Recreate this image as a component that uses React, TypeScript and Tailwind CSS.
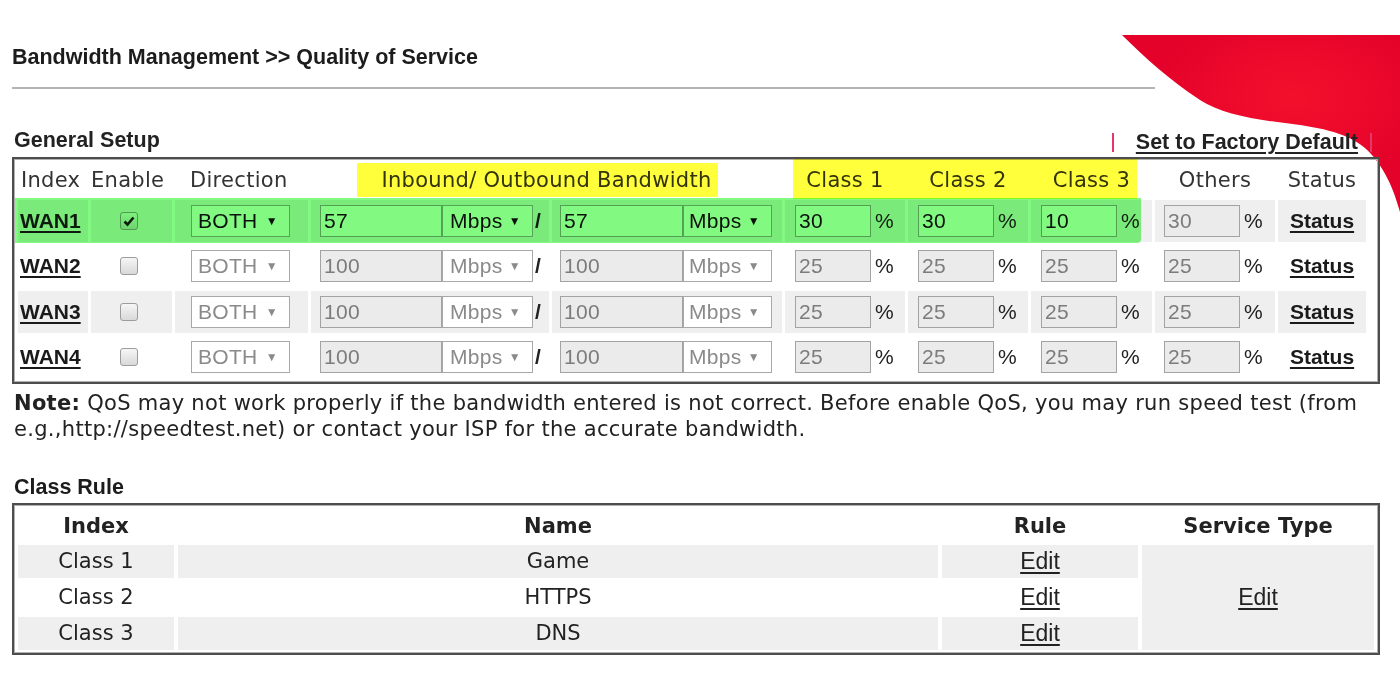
import React from "react";

type WanRow = {
  name: string;
  on: boolean;
  inbound: string;
  outbound: string;
  classes: string[];
  others: string;
  shaded: boolean;
};

const wanRows: WanRow[] = [
  { name: "WAN1", on: true, inbound: "57", outbound: "57", classes: ["30", "30", "10"], others: "30", shaded: true },
  { name: "WAN2", on: false, inbound: "100", outbound: "100", classes: ["25", "25", "25"], others: "25", shaded: false },
  { name: "WAN3", on: false, inbound: "100", outbound: "100", classes: ["25", "25", "25"], others: "25", shaded: true },
  { name: "WAN4", on: false, inbound: "100", outbound: "100", classes: ["25", "25", "25"], others: "25", shaded: false },
];

const classRules = [
  { index: "Class 1", name: "Game", shaded: true },
  { index: "Class 2", name: "HTTPS", shaded: false },
  { index: "Class 3", name: "DNS", shaded: true },
];

const arial = "font-['Liberation_Sans',Arial,sans-serif]";
const verdana = "font-['DejaVu_Sans',Verdana,sans-serif]";

function Field({ value, on, width }: { value: string; on: boolean; width: string }) {
  return (
    <div
      className={`${width} ${arial} h-[32px] shrink-0 border border-[#a3a3a3] pl-[3px] text-[21px] leading-[30px] ${
        on ? "bg-white text-[#111]" : "bg-[#ebebeb] text-[#7c7c7c]"
      }`}
    >
      {value}
    </div>
  );
}

function Pick({ label, on, width, pl }: { label: string; on: boolean; width: string; pl: string }) {
  return (
    <div
      className={`${width} ${pl} ${arial} flex h-[32px] shrink-0 items-center justify-between border border-[#a8a8a8] bg-white pr-[11px] text-[21px] ${
        on ? "text-[#111]" : "text-[#8a8a8a]"
      }`}
    >
      <span>{label}</span>
      <span className="text-[12px]">▼</span>
    </div>
  );
}

function Check({ on }: { on: boolean }) {
  return (
    <div className="flex h-[18px] w-[18px] items-center justify-center rounded-[3px] border border-[#9c9c9c] bg-gradient-to-b from-[#f6f6f6] to-[#d9d9d9]">
      {on && (
        <svg width="14" height="14" viewBox="0 0 14 14">
          <path d="M2.5 7.5 L5.5 10.5 L11.5 3.5" fill="none" stroke="#1b1b1b" strokeWidth="2.6" />
        </svg>
      )}
    </div>
  );
}

function Percent({ value, on }: { value: string; on: boolean }) {
  return (
    <div className="flex h-full items-center pl-[10px]">
      <Field value={value} on={on} width="w-[76px]" />
      <span className={`${arial} ml-[4px] text-[21px] text-[#222]`}>%</span>
    </div>
  );
}

function Swoosh() {
  return (
    <svg className="absolute left-[1100px] top-[30px] z-0" width="300" height="200" viewBox="0 0 300 200">
      <defs>
        <radialGradient id="glow" cx="0.62" cy="0.35" r="0.5">
          <stop offset="0" stopColor="#f3102c" />
          <stop offset="1" stopColor="#e5022a" />
        </radialGradient>
      </defs>
      <path
        d="M22,5 L300,5 L300,182 C294,160 284,135 265,118 C245,101 215,97 185,93 C150,89 120,83 100,70 C70,50 45,28 22,5 Z"
        fill="url(#glow)"
      />
    </svg>
  );
}

export default function App() {
  return (
    <div className="relative h-[700px] w-[1400px] overflow-hidden bg-white text-[#222]">
      <Swoosh />

      <div className="relative z-10 px-[12px] pt-[45px]">
        <h1 className={`${arial} text-[21.5px] font-bold leading-[24px] text-[#1c1c1c]`}>
          Bandwidth Management &gt;&gt; Quality of Service
        </h1>
        <div className="mt-[18px] h-[2px] w-[1143px] bg-[#b4b4b4]" />

        <div className={`${arial} mt-[39px] flex h-[24px] items-center justify-between text-[21.5px] font-bold leading-[24px]`}>
          <span className="pl-[2px]">General Setup</span>
          <span className="flex items-center pr-[16px] pt-[4px]">
            <span className="mr-[22px] h-[19px] w-[2px] bg-[#e2386c]" />
            <span className="underline underline-offset-[3px]">Set to Factory Default</span>
            <span className="ml-[12px] h-[19px] w-[2px] bg-[#e2386c]" />
          </span>
        </div>

        {/* General setup table */}
        <div className="relative mt-[5px] h-[227px] w-[1368px] border-2 border-[#4d4d4d] shadow-[inset_0_0_0_1px_#b0b0b0]">
          <div
            className={`${verdana} grid grid-cols-[70px_81px_133px_238px_230px_120px_120px_121px_120px_88px] grid-rows-[33px_42px_42px_42px_42px] gap-x-[3px] gap-y-[3.5px] pl-[4px] pt-[4px] text-[21px] tracking-[0.3px] text-[#333]`}
          >
            <div className="flex items-center pl-[3px] pt-[3px]">Index</div>
            <div className="flex items-center pt-[3px]">Enable</div>
            <div className="flex items-center pl-[15px] pt-[3px]">Direction</div>
            <div className="col-span-2 flex items-center justify-center pt-[3px]">Inbound/ Outbound Bandwidth</div>
            <div className="flex items-center justify-center pt-[3px]">Class 1</div>
            <div className="flex items-center justify-center pt-[3px]">Class 2</div>
            <div className="flex items-center justify-center pt-[3px]">Class 3</div>
            <div className="flex items-center justify-center pt-[3px]">Others</div>
            <div className="flex items-center justify-center pt-[3px]">Status</div>

            {wanRows.map((row) => {
              const bg = row.shaded ? "bg-[#efefef]" : "bg-white";
              return (
                <React.Fragment key={row.name}>
                  <div className={`${bg} ${arial} flex items-center pl-[2px] text-[21px] font-bold tracking-normal text-[#1a1a1a] underline underline-offset-[3px]`}>
                    {row.name}
                  </div>
                  <div className={`${bg} flex items-center justify-center pr-[5px]`}>
                    <Check on={row.on} />
                  </div>
                  <div className={`${bg} flex items-center pl-[16px]`}>
                    <Pick label="BOTH" on={row.on} width="w-[99px]" pl="pl-[6px]" />
                  </div>
                  <div className={`${bg} flex items-center pl-[9px]`}>
                    <Field value={row.inbound} on={row.on} width="w-[122px]" />
                    <Pick label="Mbps" on={row.on} width="w-[91px]" pl="pl-[7px]" />
                    <span className={`${arial} ml-[2px] text-[21px] font-bold text-[#222]`}>/</span>
                  </div>
                  <div className={`${bg} flex items-center pl-[8px]`}>
                    <Field value={row.outbound} on={row.on} width="w-[123px]" />
                    <Pick label="Mbps" on={row.on} width="w-[89px]" pl="pl-[5px]" />
                  </div>
                  {row.classes.map((c, i) => (
                    <div key={i} className={bg}>
                      <Percent value={c} on={row.on} />
                    </div>
                  ))}
                  <div className={`${bg} flex items-center pl-[9px]`}>
                    <Field value={row.others} on={false} width="w-[76px]" />
                    <span className={`${arial} ml-[4px] text-[21px] text-[#222]`}>%</span>
                  </div>
                  <div className={`${bg} ${arial} flex items-center justify-center text-[21px] font-bold tracking-normal text-[#1a1a1a] underline underline-offset-[3px]`}>
                    Status
                  </div>
                </React.Fragment>
              );
            })}
          </div>

          {/* highlighter marks */}
          <div className="pointer-events-none absolute left-[343px] top-[4px] h-[34px] w-[361px] bg-[#ffff3c] mix-blend-multiply" />
          <div className="pointer-events-none absolute left-[779px] top-0 h-[40px] w-[344px] bg-[#ffff3c] mix-blend-multiply" />
          <div className="pointer-events-none absolute left-[1px] top-[39px] h-[45px] w-[1126px] rounded-br-[4px] bg-[#82fa82] mix-blend-multiply" />
        </div>

        <p className={`${verdana} mt-[6px] whitespace-nowrap pl-[2px] text-[21px] leading-[26px] tracking-[0.3px] text-[#222]`}>
          <b>Note:</b> QoS may not work properly if the bandwidth entered is not correct. Before enable QoS, you may run speed test (from
          <br />
          e.g.,http://speedtest.net) or contact your ISP for the accurate bandwidth.
        </p>

        <h2 className={`${arial} mt-[33px] pl-[2px] text-[21.5px] font-bold leading-[24px] text-[#1c1c1c]`}>Class Rule</h2>

        {/* Class rule table */}
        <div className="mt-[4px] h-[152px] w-[1368px] border-2 border-[#4d4d4d] shadow-[inset_0_0_0_1px_#b0b0b0]">
          <div
            className={`${verdana} grid grid-cols-[156px_760px_196px_232px] grid-rows-[35px_33px_33px_33px] gap-x-[4px] gap-y-[3px] px-[4px] pt-[2px] text-[21px] text-[#222]`}
          >
            <div className="flex items-center justify-center pt-[4px] font-bold">Index</div>
            <div className="flex items-center justify-center pt-[4px] font-bold">Name</div>
            <div className="flex items-center justify-center pt-[4px] font-bold">Rule</div>
            <div className="flex items-center justify-center pt-[4px] font-bold">Service Type</div>

            {classRules.map((r, i) => {
              const bg = r.shaded ? "bg-[#efefef]" : "bg-white";
              return (
                <React.Fragment key={r.index}>
                  <div className={`${bg} flex items-center justify-center`}>{r.index}</div>
                  <div className={`${bg} flex items-center justify-center`}>{r.name}</div>
                  <div className={`${bg} ${arial} flex items-center justify-center text-[23px] underline underline-offset-[3px]`}>
                    Edit
                  </div>
                  {i === 0 && (
                    <div className={`${arial} row-span-3 flex items-center justify-center bg-[#efefef] text-[23px] underline underline-offset-[3px]`}>
                      Edit
                    </div>
                  )}
                </React.Fragment>
              );
            })}
          </div>
        </div>
      </div>
    </div>
  );
}
